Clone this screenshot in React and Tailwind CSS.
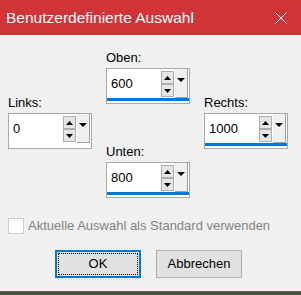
import React from "react";

function Spin({ value, blue }) {
  return (
    <div className="w-[84px] h-[36px] border border-[#a9a9a9] bg-white flex flex-col">
      <div className="flex h-[29px]">
        <div className="flex-1 flex items-center pl-[4px] text-[13px] text-black">{value}</div>
        <div className="flex flex-col w-[13px] pt-[2px]">
          <div className="w-[13px] h-[13px] border border-[#adadad] bg-[#e5e5e5] flex items-center justify-center">
            <svg width="7" height="4" viewBox="0 0 7 4"><path d="M0 4 L3.5 0 L7 4 Z" fill="#000" /></svg>
          </div>
          <div className="w-[13px] h-[13px] border border-[#adadad] bg-[#e5e5e5] flex items-center justify-center">
            <svg width="7" height="4" viewBox="0 0 7 4"><path d="M0 0 L3.5 4 L7 0 Z" fill="#000" /></svg>
          </div>
        </div>
        <div className="ml-[1px] mr-[1px] w-[13px] h-[29px] bg-[#f0f0f0] border-r border-b border-[#a0a0a0] flex justify-center pt-[9px]">
          <svg width="8" height="4" viewBox="0 0 8 4"><path d="M0 0 L4 4 L8 0 Z" fill="#000" /></svg>
        </div>
      </div>
      <div className={blue ? "h-[3px] bg-[#0078d7]" : "h-[3px] bg-white"} />
    </div>
  );
}

function Field({ label, value, blue }) {
  return (
    <div className="flex flex-col">
      <div className="h-[16px] leading-[16px] text-[13px] text-black">{label}</div>
      <div className="mt-[2px]">
        <Spin value={value} blue={blue} />
      </div>
    </div>
  );
}

export default function App() {
  return (
    <div
      className="w-[301px] h-[295px] flex flex-col bg-[#f0f0f0] overflow-hidden"
      style={{ fontFamily: '"Liberation Sans", Arial, sans-serif' }}
    >
      <div className="h-[35px] bg-[#d13438] flex items-center justify-between pl-[6px] pr-[14px] shrink-0">
        <span className="text-white text-[15.5px]">Benutzerdefinierte Auswahl</span>
        <svg width="12" height="12" viewBox="0 0 12 12">
          <path d="M0.5 0.5 L11.5 11.5 M11.5 0.5 L0.5 11.5" stroke="#fff" strokeWidth="1" />
        </svg>
      </div>
      <div className="flex-1 flex flex-col">
        <div className="flex pl-[8px] gap-[14px]">
          <div className="pt-[60px]">
            <Field label="Links:" value="0" />
          </div>
          <div className="pt-[15px] flex flex-col gap-[40px]">
            <Field label="Oben:" value="600" blue />
            <Field label="Unten:" value="800" blue />
          </div>
          <div className="pt-[60px]">
            <Field label="Rechts:" value="1000" blue />
          </div>
        </div>
        <div className="flex items-center pl-[8px] mt-[20px] h-[16px]">
          <div className="w-[16px] h-[16px] border border-[#cccccc] bg-white" />
          <span className="ml-[4px] text-[13px] text-[#838383]">Aktuelle Auswahl als Standard verwenden</span>
        </div>
        <div className="flex pl-[55px] gap-[15px] mt-[16px]">
          <div className="w-[86px] h-[28px] border-2 border-[#0078d7] bg-[#e1e1e1] p-[1px]">
            <div className="w-full h-full border border-dotted border-black flex items-center justify-center text-[13px] text-black">OK</div>
          </div>
          <div className="w-[86px] h-[28px] border border-[#adadad] bg-[#e1e1e1] flex items-center justify-center text-[13px] text-black">Abbrechen</div>
        </div>
      </div>
      <div className="h-[1px] bg-[#d13438] shrink-0" />
      <div className="h-[3px] bg-[#4a4a4a] shrink-0" />
    </div>
  );
}
